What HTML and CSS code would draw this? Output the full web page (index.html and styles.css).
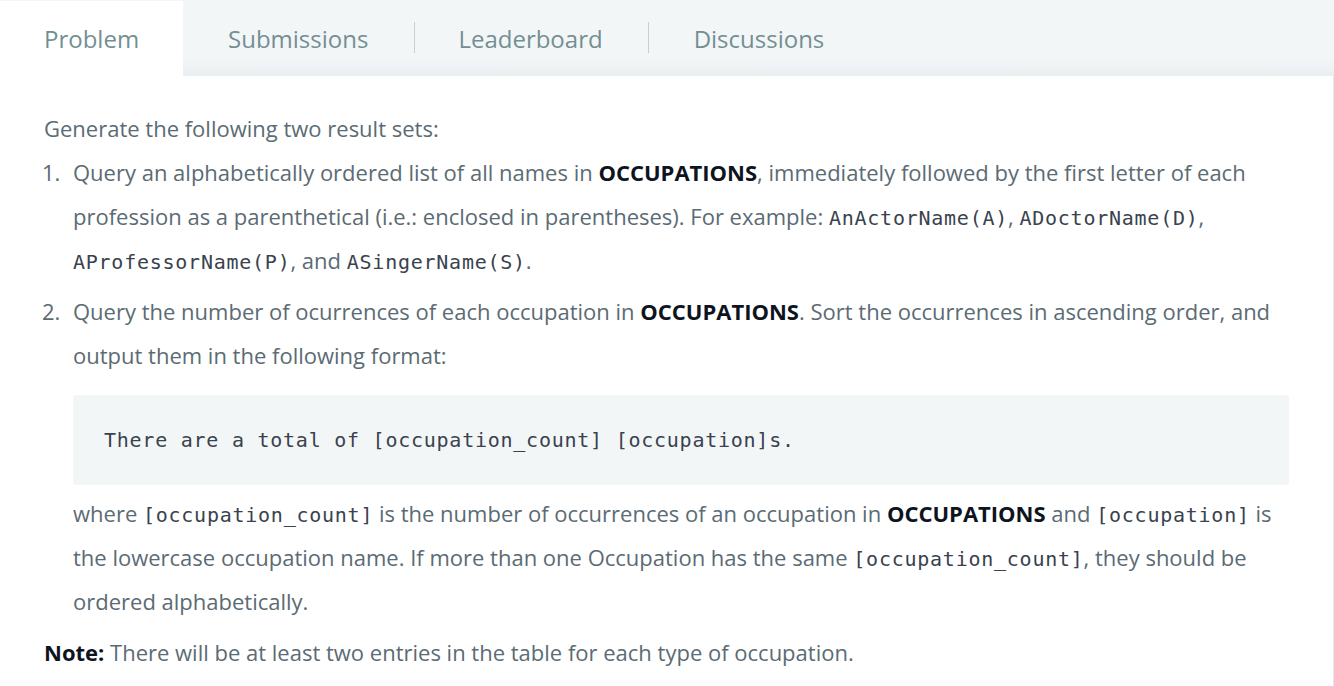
FILE: index.html
```html
<!DOCTYPE html>
<html lang="en">
<head>
<meta charset="utf-8">
<title>Problem</title>
<link rel="stylesheet" href="styles.css">
</head>
<body>
<div class="page">
  <nav class="tabs">
    <div class="tab active">Problem</div>
    <div class="tab sep first">Submissions</div>
    <div class="tab sep second">Leaderboard</div>
    <div class="tab">Discussions</div>
  </nav>
  <div class="content">
    <p class="intro">Generate the following two result sets:</p>
    <ol class="steps">
      <li>Query an alphabetically ordered list of all names in <strong>OCCUPATIONS</strong>, immediately followed by the first letter of each profession as a parenthetical (i.e.: enclosed in parentheses). For example: <code>AnActorName(A)</code>, <code>ADoctorName(D)</code>, <code>AProfessorName(P)</code>, and <code>ASingerName(S)</code>.</li>
      <li>Query the number of ocurrences of each occupation in <strong>OCCUPATIONS</strong>. Sort the occurrences in ascending order, and output them in the following format:
        <pre class="block">There are a total of [occupation_count] [occupation]s.</pre>
        <p class="after">where <code>[occupation_count]</code> is the number of occurrences of an occupation in <strong>OCCUPATIONS</strong> and <code>[occupation]</code> is the lowercase occupation name. If more than one Occupation has the same <code>[occupation_count]</code>, they should be ordered alphabetically.</p>
      </li>
    </ol>
    <p class="note"><strong>Note:</strong> There will be at least two entries in the table for each type of occupation.</p>
  </div>
</div>
</body>
</html>
```

FILE: styles.css
```css
html, body {
  margin: 0;
  padding: 0;
  background: #ffffff;
}
body {
  font-family: "Open Sans", "Noto Sans", sans-serif;
  color: #5b6b74;
  overflow: hidden;
}
.page {
  width: 1334px;
}
.tabs {
  display: flex;
  align-items: stretch;
  height: 76px;
  background: linear-gradient(to bottom, #f3f6f7 0, #f3f6f7 60px, #e9eef0 76px);
}
.tab {
  display: flex;
  align-items: center;
  padding: 0 45px 0 45px;
  font-size: 24px;
  color: #738f93;
  position: relative;
  box-sizing: border-box;
}
.tab.active {
  background: #ffffff;
  margin-top: 1px;
  width: 183px;
  padding-left: 44px;
  padding-bottom: 1px;
}
.tab.first {
  padding-right: 47px;
}
.tab.second {
  padding-left: 43px;
  padding-right: 46px;
}
.tab.sep::after {
  content: "";
  position: absolute;
  right: 0;
  top: 22px;
  height: 31px;
  width: 1px;
  background: #c4d0d3;
}
.content {
  border-right: 1px solid #e3e7e9;
  padding: 30px 44px 14px 44px;
  font-size: 22px;
  line-height: 44px;
}
.intro {
  margin: 0;
}
.steps {
  margin: 0;
  padding: 0;
  list-style: none;
  counter-reset: step;
}
.steps li {
  position: relative;
  padding-left: 29px;
  margin-bottom: 7px;
  counter-increment: step;
}
.steps li::before {
  content: counter(step) ".";
  position: absolute;
  left: -2px;
  top: 0;
}
strong {
  color: #0e141e;
  font-weight: 700;
}
code, pre {
  font-family: "DejaVu Sans Mono", "Liberation Mono", monospace;
  color: #39424e;
  font-size: 20px;
  letter-spacing: 0.75px;
}
code {
  line-height: 1;
}
pre.block {
  margin: 18px 0 6px 0;
  background: #f3f6f7;
  border-radius: 3px;
  padding: 23px 31px;
  line-height: 44px;
  height: 44px;
}
.after {
  margin: 0;
}
.note {
  margin: 0;
}
```
